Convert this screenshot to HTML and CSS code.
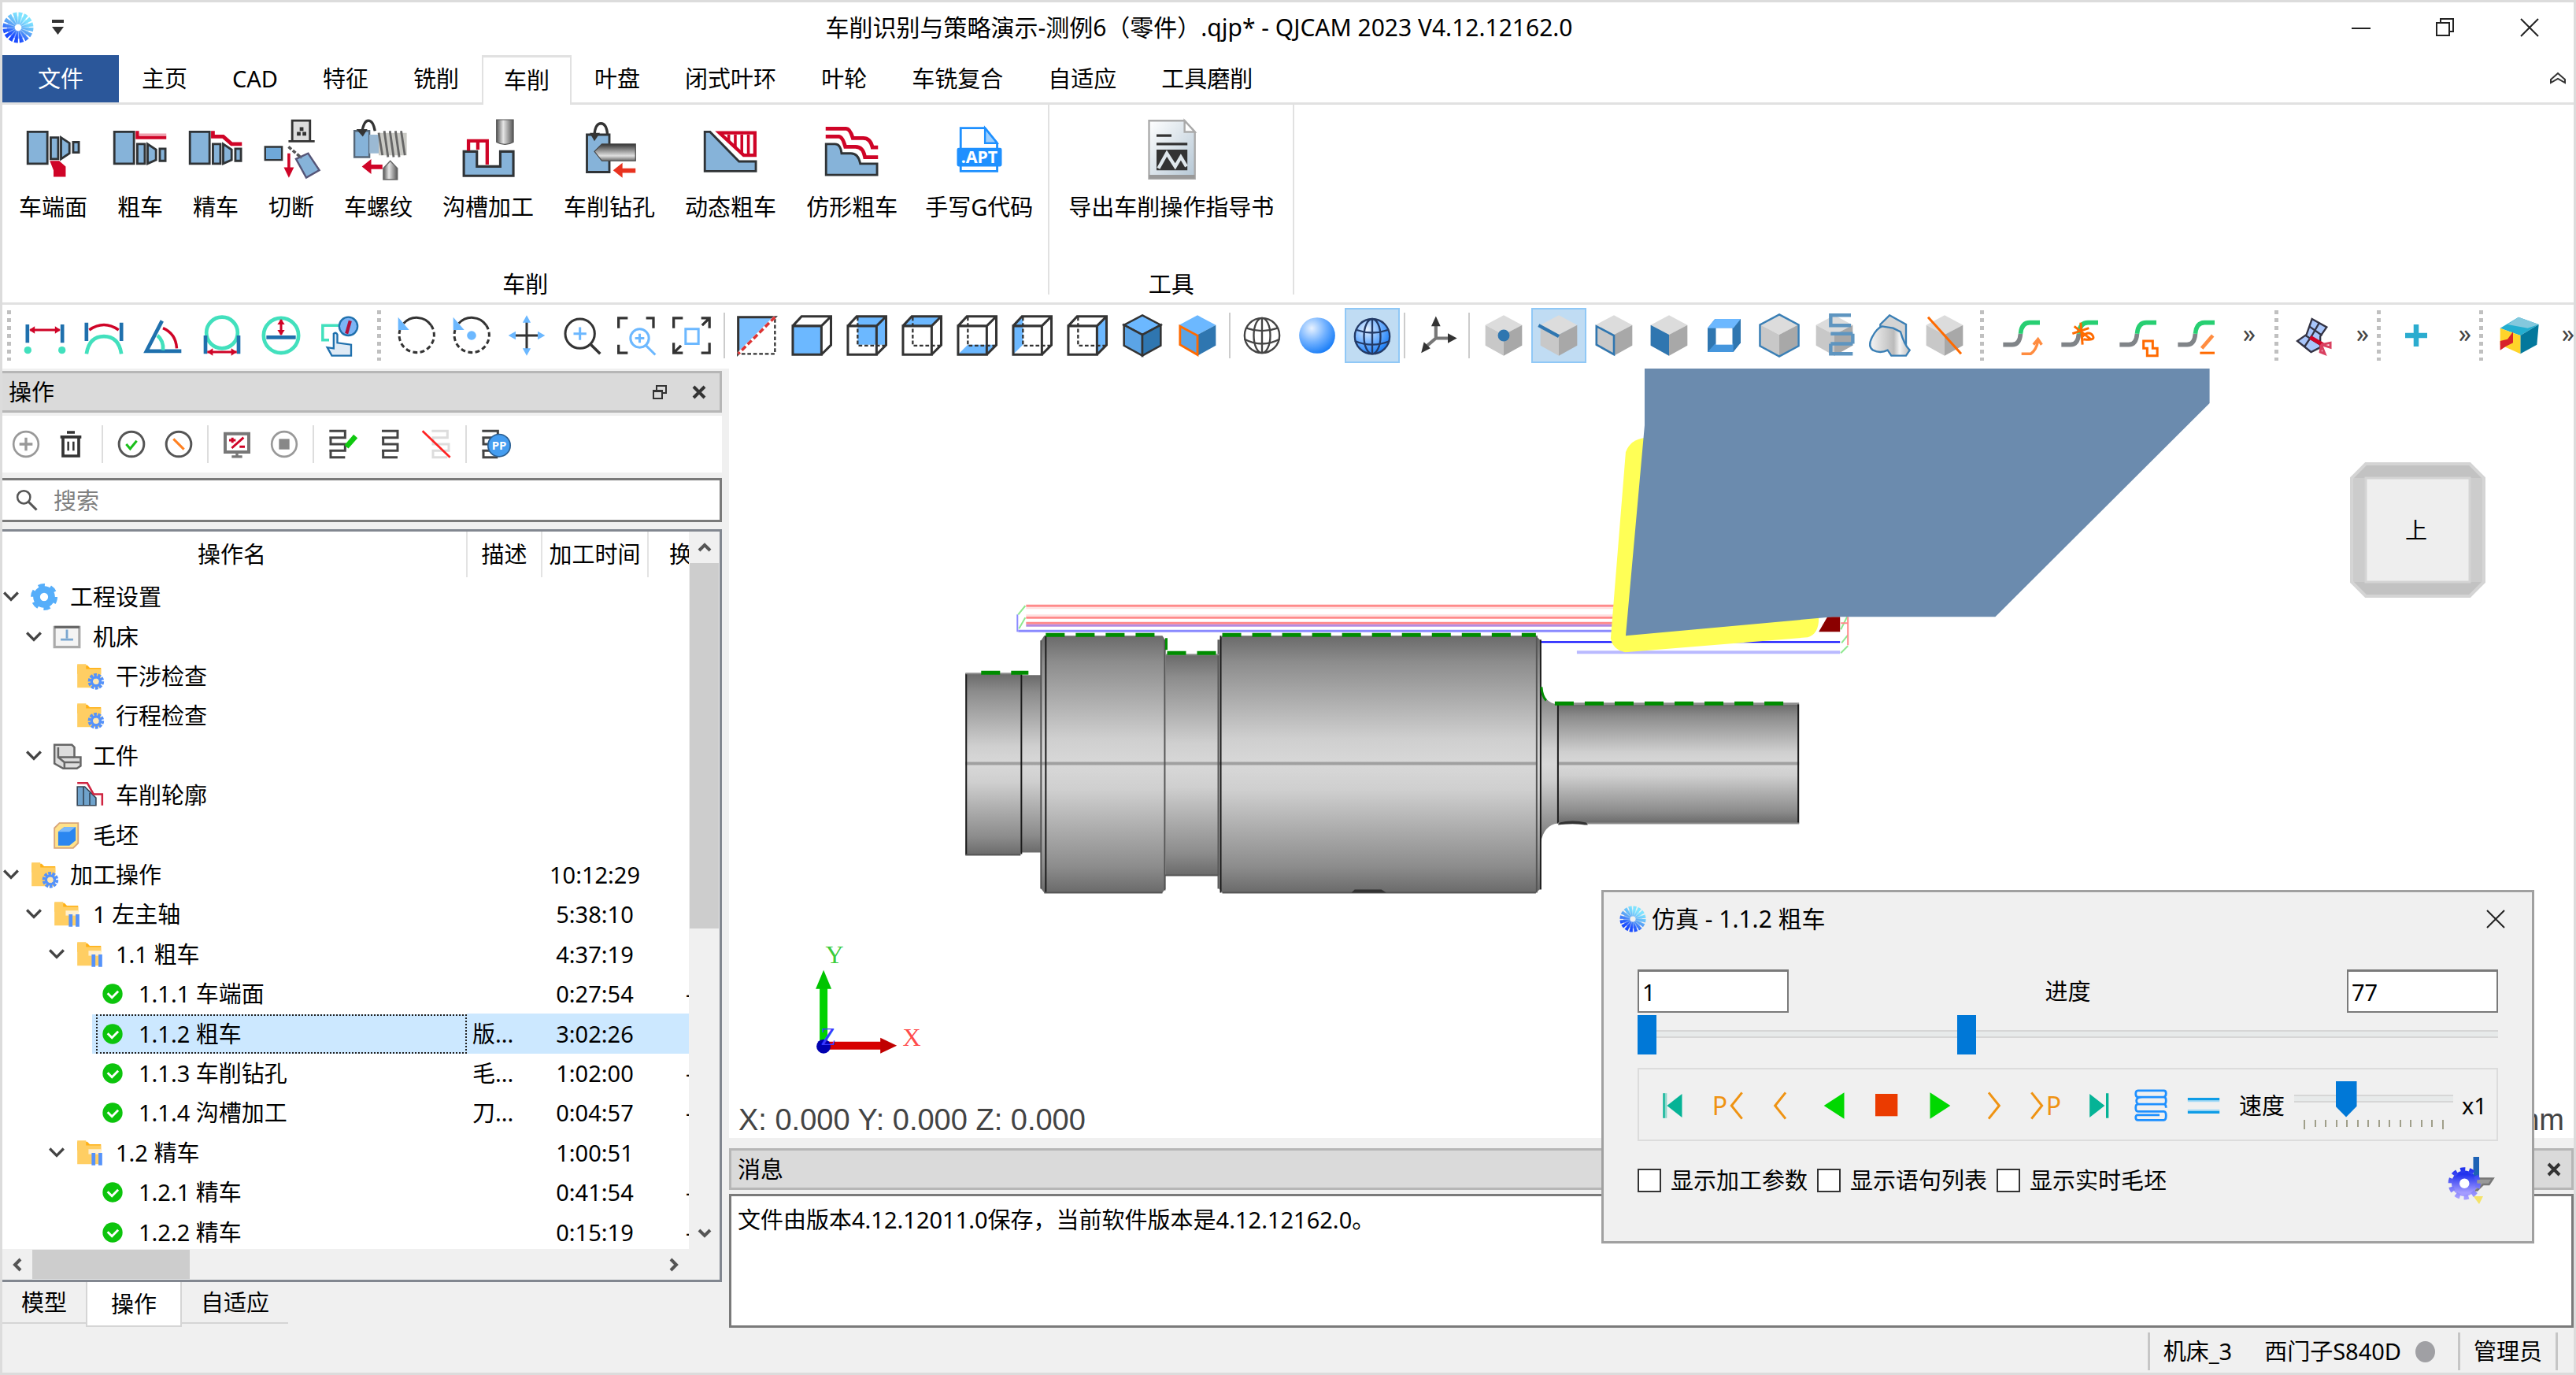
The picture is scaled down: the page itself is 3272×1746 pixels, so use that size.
FILE: index.html
```html
<!DOCTYPE html>
<html lang="zh-CN">
<head>
<meta charset="utf-8">
<title>QJCAM 2023</title>
<link rel="stylesheet" href="styles.css">
</head>
<body>
<svg class="defs" aria-hidden="true">
  <defs>
    <linearGradient id="steel" x1="0" y1="0" x2="0" y2="1">
      <stop offset="0" stop-color="#6a6a6a"/><stop offset=".1" stop-color="#8c8c8c"/><stop offset=".25" stop-color="#adadad"/><stop offset=".4" stop-color="#cfcfcf"/><stop offset=".5" stop-color="#d8d8d8"/><stop offset=".6" stop-color="#cfcfcf"/><stop offset=".75" stop-color="#adadad"/><stop offset=".9" stop-color="#8c8c8c"/><stop offset="1" stop-color="#6a6a6a"/>
    </linearGradient>
    <linearGradient id="rod" x1="0" y1="0" x2="1" y2="0"><stop offset="0" stop-color="#555"/><stop offset=".4" stop-color="#e6e6e6"/><stop offset="1" stop-color="#555"/></linearGradient>
    <linearGradient id="rodv" x1="0" y1="0" x2="0" y2="1"><stop offset="0" stop-color="#333"/><stop offset=".7" stop-color="#e0e0e0"/><stop offset="1" stop-color="#666"/></linearGradient>
    <linearGradient id="petal" x1=".8" y1="0" x2=".2" y2="1"><stop offset="0" stop-color="#7fe3ff"/><stop offset=".5" stop-color="#5ba4f5"/><stop offset="1" stop-color="#1a4bff"/></linearGradient>
    <radialGradient id="ball" cx=".35" cy=".3" r=".8"><stop offset="0" stop-color="#e8f2ff"/><stop offset=".5" stop-color="#6fb0ff"/><stop offset="1" stop-color="#0a74f5"/></radialGradient>
    <linearGradient id="paper" x1="0" y1="0" x2="1" y2="1"><stop offset="0" stop-color="#fff"/><stop offset="1" stop-color="#b4c6d4"/></linearGradient>
    <linearGradient id="shade" x1="0" y1="0" x2="1" y2="0"><stop offset="0" stop-color="#f4f4f4"/><stop offset=".6" stop-color="#bbb"/><stop offset=".75" stop-color="#f4f4f4"/><stop offset="1" stop-color="#bbb"/></linearGradient>
    <linearGradient id="gearc" x1="0" y1="0" x2="0" y2="1"><stop offset="0" stop-color="#2233ee"/><stop offset="1" stop-color="#a49cff"/></linearGradient>
  </defs>
  <symbol id="logo" viewBox="0 0 24 24"><circle cx="12" cy="12" r="7.200" fill="none" stroke="url(#petal)" stroke-width="9" stroke-dasharray="2.010 .817"/><circle cx="12" cy="12" r="5.500" fill="none" stroke="url(#petal)" stroke-width="6" opacity=".5"/></symbol>
  <symbol id="cube" viewBox="0 0 24 24"><path fill="#dcdcdc" d="M12 1l10 5.300-10 5.300L2 6.300z"/><path fill="#c8c8c8" d="M2 6.300l10 5.300V23L2 17.500z"/><path fill="#a8a8a8" d="M22 6.300l-10 5.300V23l10-5.500z"/></symbol>
  <symbol id="wire" viewBox="0 0 24 24"><path fill="none" stroke="#333" stroke-width="1.300" d="M1.700 6.800h15.600v15.600H1.700zM1.700 6.800L6.500 1.600h16v15.600l-5.200 5.200M17.300 6.800l5.200-5.200"/><path fill="none" stroke="#333" stroke-dasharray="2 1.200" d="M7 2v15.500h15"/></symbol>
  <symbol id="zig" viewBox="0 0 24 24"><path fill="none" stroke="#444" stroke-width="1.800" d="M2 2h12v5H3v5h11v5H3v5h11M2 7h9M2 17h9"/></symbol>
  <symbol id="curve" viewBox="0 0 24 24"><path fill="none" stroke="#808488" stroke-width="2.400" d="M1 17h5q4 0 4.500-6"/><path fill="none" stroke="#27cf72" stroke-width="2.400" d="M10.500 11q.5-6 5-6H21"/></symbol>
  <symbol id="down" viewBox="0 0 20 20"><path fill="none" stroke="#444" stroke-width="3" d="M2 5l8 8 8-8"/></symbol>
  <symbol id="folder" viewBox="0 0 24 24"><path fill="#ffb115" d="M2 3h8l2 2h9v5H2z"/><path fill="#ffce63" d="M2 2h7v4h12v15H2z"/></symbol>
  <symbol id="foldergear" viewBox="0 0 24 24"><use href="#folder"/><circle cx="17" cy="16" r="4.500" fill="#ffe7b0" stroke="#5592fa" stroke-width="4" stroke-dasharray="2 .8"/><circle cx="17" cy="16" r="3.500" fill="none" stroke="#5592fa" stroke-width="2"/></symbol>
  <symbol id="folderbars" viewBox="0 0 24 24"><use href="#folder"/><path fill="#fff0cf" d="M11 9h10v4H11z"/><path stroke="#5592fa" stroke-width="3" d="M15 12v10M20.500 12v10"/></symbol>
  <symbol id="ok" viewBox="0 0 24 24"><circle cx="12" cy="12" r="8" fill="#0cc40c"/><path fill="none" stroke="#fff" stroke-width="1.800" d="M8 11.500l3.500 3.500 5-5"/></symbol>
  <symbol id="restore" viewBox="0 0 20 20"><path fill="none" stroke="currentColor" stroke-width="2" d="M6 7V2h12v9h-5M2 8h11v10H2zM2 9h11"/></symbol>
  <symbol id="close" viewBox="0 0 20 20"><path fill="none" stroke="currentColor" stroke-width="4" d="M3 3l14 14M17 3L3 17"/></symbol>
  <symbol id="closethin" viewBox="0 0 24 24"><path fill="none" stroke="#222" stroke-width="2" d="M1 1l22 22M23 1L1 23"/></symbol>
  <symbol id="turned" viewBox="0 0 32 32"><g fill="#86b3d9" stroke="#2f3336" stroke-width="1.200"><path d="M2.200 6.500h10.500v17H2.200zM14.500 13h4v10.500h-4zM20 13l4.500 3v5.500l-4.500 2zM26.500 15.500h3v6.500h-3z"/></g></symbol>
</svg>

<div class="window">
  <header class="titlebar">
    <div class="quick"><svg class="s40"><use href="#logo"/></svg><button class="qmenu" aria-label="自定义"><svg viewBox="0 0 20 24"><path fill="#333" d="M3 2h15v4H3zM3 11h15l-7.500 10z"/></svg></button></div>
    <h1>车削识别与策略演示-测例6（零件）.qjp* - QJCAM 2023 V4.12.12162.0</h1>
    <div class="winbtns">
      <button aria-label="最小化"><svg class="s24" viewBox="0 0 24 24"><path stroke="#222" stroke-width="2" d="M0 13h24"/></svg></button>
      <button aria-label="还原"><svg class="s24" viewBox="0 0 24 24"><path fill="none" stroke="#222" stroke-width="2" d="M6 6V1h16v16h-5M1 6h16v16H1z"/></svg></button>
      <button aria-label="关闭"><svg class="s24"><use href="#closethin"/></svg></button>
    </div>
  </header>

  <nav class="tabs">
    <button class="file">文件</button><button>主页</button><button>CAD</button><button>特征</button><button>铣削</button><button class="active">车削</button><button>叶盘</button><button>闭式叶环</button><button>叶轮</button><button>车铣复合</button><button>自适应</button><button>工具磨削</button>
    <span class="fill"></span>
    <svg class="collapse" viewBox="0 0 24 24"><path fill="none" stroke="#333" stroke-width="2" d="M3 13l9-8 9 8v4l-9-5-9 5z"/></svg>
  </nav>

  <section class="ribbon">
    <div class="group">
      <div class="items">
        <button><svg viewBox="0 0 32 32"><g fill="#86b3d9" stroke="#2f3336" stroke-width="1.200"><path d="M2.200 6.500h10.500v17H2.200zM14.500 9.500h4v11.500h-4zM20 9.500l4.500 3v5.500l-4.500 3zM26.500 12h3v5.500h-3z"/></g><path fill="#cf0427" d="M14 22h5l3.500 3v5.500H16V27z"/></svg>车端面</button>
        <button><svg viewBox="0 0 32 32"><use href="#turned"/><path fill="none" stroke="#cf0427" stroke-width="1.800" d="M14.500 6v3.500H30"/><path stroke="#f0a0ae" stroke-width="1.200" d="M15.500 8H30"/></svg>粗车</button>
        <button><svg viewBox="0 0 32 32"><use href="#turned"/><path fill="none" stroke="#cf0427" stroke-width="2" d="M14.500 6v3H20l4.500 4H30"/></svg>精车</button>
        <button><svg viewBox="0 0 32 32"><path fill="#ddd" stroke="#333" stroke-width="1.200" d="M16.500.5h9.500v11h-9.500zM14.500 11.500h14"/><path fill="#333" d="M20.500 4h2v2h-2zM19 6.500h2v2h-2zM22 6.500h2v2h-2z"/><path fill="#6fa8d8" stroke="#2f3336" d="M2 14.500h9v7H2z"/><path fill="#86b3d9" stroke="#557" d="M18.500 21l6.500-3 6 9-7 4z"/><path stroke="#555" stroke-width="1.500" stroke-dasharray="2 1" d="M14.500 14.500l7 6"/><path stroke="#cf0427" stroke-width="1.500" d="M14.700 18v10"/><path fill="#cf0427" d="M12 25.500h5.400l-2.700 5.500z"/></svg>切断</button>
        <button><svg viewBox="0 0 32 32"><path fill="#86b3d9" stroke="#567" d="M3 6h8v14H3z"/><path fill="#9bb9d3" d="M11 8h5v10h-5z"/><path fill="#c9c9c4" d="M16 7h15v12H16z"/><path fill="none" stroke="#666" stroke-width="1.200" d="M16 7l2 12M19 6l2 14M22 6l2 14M25 6l2 14M28 6l2 13"/><path fill="none" stroke="#333" stroke-width="1.400" d="M14 6q-1-5.500-3.500-5.500T7 7"/><path fill="#333" d="M4 5h6l-2.500 4z"/><path fill="url(#rod)" stroke="#666" stroke-width=".6" d="M18.500 32v-6l3.700-4 3.800 4v6z"/><path fill="#cf0427" d="M7 25l5-4v3h6v2.400h-6V29z"/></svg>车螺纹</button>
        <button><svg viewBox="0 0 32 32"><path fill="#86b3d9" stroke="#2f3336" stroke-width="1.300" d="M3 17h7v8h12.500v-8h7v13H3z"/><path fill="none" stroke="#cf0427" stroke-width="1.800" d="M5.500 16.500v-5.200h10V24M10.500 11v5"/><path fill="url(#rod)" stroke="#555" stroke-width=".5" d="M20.500 0h9v12q-4.500 2.500-9 0z"/></svg>沟槽加工</button>
        <button><svg viewBox="0 0 32 32"><path fill="#86b3d9" stroke="#2f3336" stroke-width="1.200" d="M4 8h12v20H4z"/><path fill="url(#rodv)" stroke="#444" stroke-width=".5" d="M8 17l4-4h18v9H12z"/><path fill="none" stroke="#333" stroke-width="1.400" d="M15 8q-.5-6-3.500-6T8 8"/><path fill="#333" d="M5.500 7h5.500l-3 4.500z"/><path fill="#e8321f" d="M18 27l5-4v3h7v2.400h-7V31z"/></svg>车削钻孔</button>
        <button><svg viewBox="0 0 32 32"><path fill="#86b3d9" stroke="#2f3336" stroke-width="1.200" d="M2.200 6.500H5l15.500 15.800h9V27.500H2.200z"/><path fill="#fff" stroke="#cf0427" stroke-width="1.800" d="M10 7h19v12h-6z"/><path stroke="#cf0427" stroke-width="1.500" d="M15 8v4M18.500 8v7M22 8v10M25.500 8v11"/></svg>动态粗车</button>
        <button><svg viewBox="0 0 32 32"><path fill="#86b3d9" stroke="#2f3336" stroke-width="1.200" d="M2.200 13H7q3 0 3.500 5h5q4 0 5 5.500h9V29.500H2.200z"/><path fill="none" stroke="#cf0427" stroke-width="2" d="M2 4.800h11q2 0 3.500 5H22q4 0 5 5h3M2 9h7q2 0 3.500 5.500H18q4 0 5 5.500h7"/></svg>仿形粗车</button>
        <button class="last"><svg viewBox="0 0 32 32"><path fill="#fff" stroke="#1e90ff" stroke-width="1.200" d="M6 4.500h13l6.500 8V27.500H6z"/><path fill="#9ccfff" stroke="#1e90ff" d="M19 4.500v8h6.500z"/><rect x="4" y="15" width="24" height="10" rx="1" fill="#1e90ff"/><text x="16" y="23" class="apt">.APT</text></svg>手写G代码</button>
      </div>
      <div class="caption">车削</div>
    </div>
    <div class="group tools">
      <div class="items">
        <button><svg viewBox="0 0 32 32"><path fill="url(#paper)" stroke="#aaa" d="M4 .5h19l5.500 6v25H4z"/><path fill="#fff" stroke="#aaa" d="M23 .5v6h5.500z"/><path fill="#999" d="M4 29.500h24.500v2H4z"/><path stroke="#333" stroke-width="1.400" d="M8 8.500h8M8 13h16.500"/><path fill="#333" d="M8 16h16.500v11H8z"/><path fill="none" stroke="#dfe7ec" stroke-width="1.800" d="M9 26l4.500-8 4.500 7 3-5 3 5"/></svg>导出车削操作指导书</button>
      </div>
      <div class="caption">工具</div>
    </div>
  </section>

  <div class="viewbar">
    <i class="grip first"></i>
    <div class="set wide">
      <button aria-label="距离"><svg viewBox="0 0 24 24"><path fill="none" stroke="#1f70ad" stroke-width="2" d="M2.500 6v10M21.500 6v10"/><path stroke="#cf0427" stroke-width="1.200" d="M4 9h16"/><path fill="#cf0427" d="M3.500 9l3-2v4zM20.500 9l-3-2v4z"/><circle cx="2.700" cy="20" r="2" fill="#42e0bd"/><circle cx="21.300" cy="20" r="2" fill="#42e0bd"/></svg></button>
      <button aria-label="弧长"><svg viewBox="0 0 24 24"><path fill="none" stroke="#1f70ad" stroke-width="2" d="M2.500 5v10M21.500 5v10"/><path fill="none" stroke="#cf0427" stroke-width="1.500" d="M4 9q8-5.500 16 0"/><path fill="none" stroke="#42e0bd" stroke-width="2" d="M2.500 22q1.500-9.500 9.500-9.500T21.500 22"/></svg></button>
      <button aria-label="角度"><svg viewBox="0 0 24 24"><path fill="none" stroke="#1f70ad" stroke-width="2" d="M11.500 4L3 20.500h19"/><path fill="none" stroke="#cf0427" stroke-width="1.500" d="M12 8q7 3 7.500 11"/><path fill="none" stroke="#42e0bd" stroke-width="2" d="M9 12q3.500 3 3 8"/></svg></button>
      <button aria-label="直径"><svg viewBox="0 0 24 24"><circle cx="12" cy="10.500" r="8.500" fill="none" stroke="#42e0bd" stroke-width="2"/><path stroke="#1f70ad" stroke-width="2" d="M3 12v10M21 12v10"/><path stroke="#cf0427" stroke-width="1.300" d="M4 21h16"/><path fill="#cf0427" d="M4 21l3-2v4zM20 21l-3-2v4z"/></svg></button>
      <button aria-label="半径"><svg viewBox="0 0 24 24"><circle cx="12" cy="12" r="9.500" fill="none" stroke="#42e0bd" stroke-width="2"/><path stroke="#1f70ad" stroke-width="2" d="M4 13h16"/><path stroke="#cf0427" stroke-width="1.300" d="M12 3.500v8"/><path fill="#cf0427" d="M12 3l2 3h-4zM12 12l2-3h-4z"/></svg></button>
      <button aria-label="信息"><svg viewBox="0 0 24 24"><path fill="none" stroke="#42e0bd" stroke-width="1.500" d="M12 6.500H2.500v8H6"/><circle cx="16.500" cy="7" r="5" fill="#7db4f5" stroke="#1f70ad"/><path stroke="#b0103a" stroke-width="1.800" d="M17.500 4l-2 7"/><path fill="#dfeaf5" stroke="#1f70ad" d="M8.500 11q1.500-1 2 .5V16l7.500 1v6H7.500L5 18.500l3.500.5z"/></svg></button>
    </div>
    <i class="grip"></i>
    <div class="set">
      <button aria-label="旋转"><svg viewBox="0 0 24 24"><path fill="none" stroke="#333" stroke-width="1.300" d="M5 5.500A9.500 9.500 0 0 1 20 6.500"/><path fill="none" stroke="#333" stroke-width="1.300" stroke-dasharray="2.500 1.500" d="M20 6.500A9.500 9.500 0 1 1 3 9"/><path fill="#6cb8ff" d="M2 2v7h6z"/></svg></button>
      <button aria-label="绕点旋转"><svg viewBox="0 0 24 24"><path fill="none" stroke="#333" stroke-width="1.300" d="M5 5.500A9.500 9.500 0 0 1 20 6.500"/><path fill="none" stroke="#333" stroke-width="1.300" stroke-dasharray="2.500 1.500" d="M20 6.500A9.500 9.500 0 1 1 3 9"/><path fill="#6cb8ff" d="M2 2v7h6z"/><circle cx="12" cy="12" r="2.500" fill="#6cb8ff"/></svg></button>
      <button aria-label="平移"><svg viewBox="0 0 24 24"><path stroke="#333" stroke-width="1.300" d="M12 4v16M4 12h16"/><path fill="#6cb8ff" d="M12 1l2.200 4H9.800zM12 23l2.200-4H9.800zM2 12l4-2.200v4.400zM22 12l-4-2.200v4.400z"/></svg></button>
      <button aria-label="缩放"><svg viewBox="0 0 24 24"><circle cx="11" cy="11" r="8" fill="none" stroke="#333" stroke-width="1.300"/><path stroke="#333" stroke-width="1.500" d="M17 17l5 5"/><path stroke="#6cb8ff" stroke-width="1.300" d="M11 7.500v7M7.500 11h7"/></svg></button>
      <button aria-label="窗口缩放"><svg viewBox="0 0 24 24"><path fill="none" stroke="#333" stroke-width="1.400" d="M2 8V2.500h5M17 2.500h4V8M2 17v4.500h5"/><circle cx="13.500" cy="13.500" r="5" fill="none" stroke="#6cb8ff" stroke-width="1.300"/><path stroke="#6cb8ff" stroke-width="1.300" d="M17 17.500l5 5M13.500 11v5M11 13.500h5"/></svg></button>
      <button aria-label="全屏"><svg viewBox="0 0 24 24"><path fill="none" stroke="#333" stroke-width="1.400" d="M2 8V2.500h5M17 2.500h4.500V8M2 16v5.500h5M17 21.500h4.500V16M21.500 2.500l-4 4M2 21.500l4-4"/><path fill="none" stroke="#6cb8ff" stroke-width="1.300" d="M8.500 8.500h7v8h-7z"/></svg></button>
    </div>
    <i class="bar"></i>
    <div class="set">
      <button aria-label="剖切"><svg viewBox="0 0 24 24"><path fill="#7cc0ff" stroke="#333" stroke-width="1.300" d="M2 22V2h20z"/><path fill="none" stroke="#333" stroke-dasharray="2 1.200" d="M22 3v19H3"/><path stroke="#fff" stroke-width="1.600" d="M22 2L2 22"/><path stroke="#d33" stroke-width="1.500" stroke-dasharray="3 1.500" d="M22 2L2 22"/></svg></button>
      <button aria-label="前视"><svg viewBox="0 0 24 24"><path fill="#6cb8ff" d="M2 7h15v15H2z"/><path fill="none" stroke="#333" stroke-width="1.300" d="M1.700 6.800h15.600v15.600H1.700zM1.700 6.800L6.500 1.600h16v15.600l-5.200 5.200M17.300 6.800l5.200-5.200"/></svg></button>
      <button aria-label="后视"><svg viewBox="0 0 24 24"><path fill="#6cb8ff" d="M7 2h15v15H7z"/><use href="#wire"/></svg></button>
      <button aria-label="俯视"><svg viewBox="0 0 24 24"><path fill="#6cb8ff" d="M2 7l5-5h15l-5 5z"/><use href="#wire"/></svg></button>
      <button aria-label="仰视"><svg viewBox="0 0 24 24"><path fill="#6cb8ff" d="M2 22l5-5h15l-5 5z"/><use href="#wire"/></svg></button>
      <button aria-label="左视"><svg viewBox="0 0 24 24"><path fill="#6cb8ff" d="M2 7l5-5v15l-5 5z"/><use href="#wire"/></svg></button>
      <button aria-label="右视"><svg viewBox="0 0 24 24"><path fill="#6cb8ff" d="M17 7l5-5v15l-5 5z"/><use href="#wire"/></svg></button>
      <button aria-label="轴测"><svg viewBox="0 0 24 24"><g stroke="#333" stroke-width="1.100"><path fill="#6cb8ff" d="M12 1l10 5.300-10 5.300L2 6.300z"/><path fill="#5ba4e6" d="M2 6.300l10 5.300V23L2 17.500z"/><path fill="#2f76b0" d="M22 6.300l-10 5.300V23l10-5.500z"/></g></svg></button>
      <button aria-label="正视于面"><svg viewBox="0 0 24 24"><path fill="#6cb8ff" d="M12 1l10 5.300-10 5.300L2 6.300z"/><path fill="#2f76b0" d="M22 6.300l-10 5.300V23l10-5.500z"/><path fill="#5ba4e6" stroke="#ff6a00" stroke-width="1.200" d="M2.500 7l9.500 5v10.500L2.500 17z"/></svg></button>
    </div>
    <i class="bar"></i>
    <div class="set">
      <button aria-label="线框"><svg viewBox="0 0 24 24"><g fill="none" stroke="#444"><circle cx="12" cy="12" r="9.500"/><ellipse cx="12" cy="12" rx="4.500" ry="9.500"/><path d="M3.500 8q8.500 3 17 0M2.500 14q9.500 5 19 0M12 2.500v19"/></g></svg></button>
      <button aria-label="着色"><svg viewBox="0 0 24 24"><circle cx="12" cy="12" r="9.800" fill="url(#ball)"/></svg></button>
      <button class="on" aria-label="着色带边"><svg viewBox="0 0 24 24"><circle cx="12" cy="12.500" r="9.500" fill="url(#ball)"/><g fill="none" stroke="#233a66"><circle cx="12" cy="12.500" r="9.500"/><ellipse cx="12" cy="12.500" rx="4.500" ry="9.500"/><path d="M3.500 9q8.500 3 17 0M2.500 15q9.500 4 19 0M12 3v19"/></g></svg></button>
    </div>
    <i class="bar"></i>
    <div class="set">
      <button aria-label="坐标轴"><svg viewBox="0 0 24 24"><path fill="none" stroke="#777" stroke-width="1.800" d="M11.500 5v8.500H20M11.500 13.500L5 19"/><path fill="#333" d="M11.500 1.500l2.500 5.500H9zM23 13.500l-5 2.700v-5.400zM3.500 21.500l1.500-6 3.500 3.500z"/></svg></button>
    </div>
    <i class="bar"></i>
    <div class="set picks">
      <button aria-label="选点"><svg viewBox="0 0 24 24"><use href="#cube"/><circle cx="12" cy="12" r="3.200" fill="#2f76b0"/></svg></button>
      <button class="on" aria-label="选边"><svg viewBox="0 0 24 24"><use href="#cube"/><path stroke="#2f76b0" stroke-width="1.800" d="M1 6.500l11 6"/></svg></button>
      <button aria-label="选环"><svg viewBox="0 0 24 24"><use href="#cube"/><path fill="none" stroke="#2f76b0" stroke-width="1.100" d="M2.500 7l9.500 5v10.300L2.500 17z"/></svg></button>
      <button aria-label="选面"><svg viewBox="0 0 24 24"><use href="#cube"/><path fill="#2f76b0" d="M2 6.300l10 5.300V23L2 17.500z"/></svg></button>
      <button aria-label="选框"><svg viewBox="0 0 24 24"><path fill="#2f76b0" d="M3 8l4-5h14v13l-4 5H3z"/><path fill="#6cb8ff" d="M3 8l4-5h14l-4 5z"/><path fill="#4596dd" d="M3 21l4-4.500h10V21z"/><path fill="#fff" d="M7.500 8h9v9h-9z"/></svg></button>
      <button aria-label="选体"><svg viewBox="0 0 24 24"><use href="#cube"/><path fill="none" stroke="#3a7fb5" stroke-width="1.100" d="M12 .6L22.500 6.200v11.500L12 23.400 1.500 17.700V6.200z"/></svg></button>
      <button aria-label="选刀轨"><svg viewBox="0 0 24 24"><use href="#cube"/><path fill="none" stroke="#5e95c0" stroke-width="1.900" d="M21 1H10v5.500h11M22 11H10M10 16.500h12M22 11v5.500M10 16.500V22h12"/></svg></button>
      <button aria-label="选曲面"><svg viewBox="0 0 24 24"><path fill="#d4d4d4" stroke="#3a7fb5" d="M12 1l9 5v11l-9 3-5-4V6z"/><path fill="url(#shade)" stroke="#3a7fb5" d="M8 7q-3 1-5.500 6T3 20q4 2 8 0l2 3h8l2-3q-3-3-5-10l-4-2z"/></svg></button>
      <button aria-label="取消选择"><svg viewBox="0 0 24 24"><use href="#cube"/><path stroke="#ff6a00" stroke-width="1.300" d="M3 2l18 20"/></svg></button>
    </div>
    <i class="grip"></i>
    <div class="set curves">
      <button aria-label="曲线延伸"><svg viewBox="0 0 24 24"><use href="#curve"/><path fill="none" stroke="#ff8c40" stroke-width="1.500" d="M11 22h5q3-2 4-7M17.500 17l2.500-3 2 3"/></svg></button>
      <button aria-label="曲线断开"><svg viewBox="0 0 24 24"><use href="#curve"/><path fill="none" stroke="#ff6a00" stroke-width="1.300" d="M8 7l9 7M11.500 5l1 12M7 11l9-3M12 13q4-4 6-1t-5 2"/></svg></button>
      <button aria-label="曲线复制"><svg viewBox="0 0 24 24"><use href="#curve"/><path fill="none" stroke="#ff6a00" stroke-width="1.300" d="M14 15h5v4h2.500v4H16v-4h-2z"/></svg></button>
      <button aria-label="曲线编辑"><svg viewBox="0 0 24 24"><use href="#curve"/><path stroke="#ff6a00" stroke-width="1.300" d="M13 21.500h8"/><path stroke="#ff8c40" stroke-width="2" d="M14 19l6-7"/></svg></button>
      <span class="more">»</span>
    </div>
    <i class="grip"></i>
    <div class="set end"><button aria-label="修剪曲面"><svg viewBox="0 0 24 24"><path fill="#a9c6fb" stroke="#334" d="M11 3l8 4.500-3.500 5 0 6-5 2.500L3 15l5-3.500z"/><path fill="none" stroke="#334" d="M9.500 7l7 5M7.500 12l8 5M15 5l-4 7-4 6"/><path fill="none" stroke="#cf0427" stroke-width="2.200" d="M10 13l7 4"/><path fill="none" stroke="#d94060" stroke-width="1.300" d="M16 17l5-1v2.500zM16 17l2 5-2.500-1z"/></svg></button><span class="more">»</span></div>
    <i class="grip"></i>
    <div class="set end"><button aria-label="添加"><svg viewBox="0 0 24 24"><path stroke="#2baccf" stroke-width="2.800" d="M12 6v12M6 12h12"/></svg></button><span class="more">»</span></div>
    <i class="grip"></i>
    <div class="set end"><button aria-label="毛坯仿真"><svg viewBox="0 0 24 24"><path fill="#23aed0" d="M12 2l11 4-10 6L2 8z"/><path fill="#84c8dd" d="M12 2l11 4-6 2L6 6z"/><path fill="#03789c" d="M23 6l-1 11-9 5V12z"/><path fill="#ffd42a" d="M2 8l11 4v10L2 17z"/><path fill="#d8232a" d="M2 20v-5l4-1 3-4v6l-4 2z"/></svg></button><span class="more">»</span></div>
  </div>

  <main class="work">
    <aside class="side">
      <div class="dockhead">操作<span class="headbtns"><button aria-label="浮动"><svg class="s20"><use href="#restore"/></svg></button><button aria-label="关闭"><svg class="s20"><use href="#close"/></svg></button></span></div>
      <div class="sidebar">
        <button aria-label="新建"><svg viewBox="0 0 24 24"><circle cx="12" cy="12" r="9.500" fill="none" stroke="#999" stroke-width="1.600"/><path stroke="#999" stroke-width="2" d="M12 7v10M7 12h10"/></svg></button>
        <button class="narrow" aria-label="删除"><svg viewBox="0 0 24 24"><path fill="none" stroke="#333" stroke-width="2.200" d="M6 7v14h12V7M4 6.500h16M9 3h6"/><path stroke="#333" stroke-width="1.500" d="M10 10v7M14 10v7"/></svg></button>
        <i></i>
        <button aria-label="启用"><svg viewBox="0 0 24 24"><circle cx="12" cy="12" r="9.500" fill="none" stroke="#555" stroke-width="1.800"/><path fill="none" stroke="#1bbf1b" stroke-width="1.800" d="M8 12l3 3.500 5-6"/></svg></button>
        <button aria-label="禁用"><svg viewBox="0 0 24 24"><circle cx="12" cy="12" r="9.500" fill="none" stroke="#555" stroke-width="1.800"/><path stroke="#ff8020" stroke-width="1.800" d="M8 8l8 8"/></svg></button>
        <i></i>
        <button aria-label="计算"><svg viewBox="0 0 24 24"><path fill="#fff" stroke="#777" stroke-width="2.400" d="M3 4h18v14H3z"/><path stroke="#777" stroke-width="2" d="M8 21.500h8M12 18v3"/><path fill="none" stroke="#cf0427" stroke-width="1.800" d="M6 9h5M8.500 7v4M17 7l-9 8M14 14h4"/></svg></button>
        <button aria-label="停止"><svg viewBox="0 0 24 24"><circle cx="12" cy="12" r="9.500" fill="none" stroke="#999" stroke-width="1.600"/><path fill="#888" d="M8 8h8v8H8z"/></svg></button>
        <i></i>
        <button aria-label="编辑刀轨"><svg viewBox="0 0 24 24"><use href="#zig"/><path stroke="#0fc80f" stroke-width="4" d="M15 14l7-8"/></svg></button>
        <button aria-label="刀轨"><svg viewBox="-4 0 24 24"><use href="#zig" width="24" height="24"/></svg></button>
        <button aria-label="删除刀轨"><svg viewBox="0 0 24 24"><path fill="none" stroke="#ddd" stroke-width="1.800" d="M8 2h12v5H9v5h12v5H9v5h11"/><path stroke="#f22" stroke-width="1.600" d="M1 2l21 20"/></svg></button>
        <i></i>
        <button aria-label="后处理"><svg viewBox="0 0 24 24"><use href="#zig"/><circle cx="15" cy="13" r="8.500" fill="#459df0" stroke="#2b5f92"/><text x="15" y="16" class="pp">PP</text></svg></button>
      </div>
      <label class="search"><svg class="s30" viewBox="0 0 24 24"><circle cx="9" cy="9" r="6.500" fill="none" stroke="#555" stroke-width="2"/><path stroke="#555" stroke-width="2.500" d="M14 14l8 8"/></svg><input type="text" placeholder="搜索" aria-label="搜索"></label>
      <div class="treebox">
        <div class="treeview">
          <table>
            <colgroup><col class="c1"><col class="c2"><col class="c3"><col></colgroup>
            <thead><tr><th>操作名</th><th>描述</th><th>加工时间</th><th class="cut">换</th></tr></thead>
            <tbody>
              <tr><td><div class="name"><svg class="tw"><use href="#down"/></svg><span class="item"><svg viewBox="0 0 24 24"><circle cx="12" cy="12" r="6" fill="none" stroke="#56aefa" stroke-width="5.500"/><circle cx="12" cy="12" r="9" fill="none" stroke="#56aefa" stroke-width="3.500" stroke-dasharray="5 4.425"/></svg>工程设置</span></div></td><td></td><td></td><td></td></tr>
              <tr><td><div class="name l1"><svg class="tw"><use href="#down"/></svg><span class="item"><svg viewBox="0 0 24 24"><path fill="#f4f4f4" stroke="#aaa" stroke-width="2" d="M2 4h20v16H2z"/><path stroke="#666" stroke-width="2" d="M2 4h20"/><path fill="none" stroke="#7aa6cf" stroke-width="1.800" d="M12 6v7M7 14h10"/></svg>机床</span></div></td><td></td><td></td><td></td></tr>
              <tr><td><div class="name l2"><span class="tw"></span><span class="item"><svg><use href="#foldergear"/></svg>干涉检查</span></div></td><td></td><td></td><td></td></tr>
              <tr><td><div class="name l2"><span class="tw"></span><span class="item"><svg><use href="#foldergear"/></svg>行程检查</span></div></td><td></td><td></td><td></td></tr>
              <tr><td><div class="name l1"><svg class="tw"><use href="#down"/></svg><span class="item"><svg viewBox="0 0 24 24"><path fill="#ddd" stroke="#666" stroke-width="1.600" d="M2 3h14l2 2v8h5v7l-3 2H9l-7-4z"/><path fill="none" stroke="#666" stroke-width="1.600" d="M5 5v8h13M5 13l5 4h12M10 17v5"/></svg>工件</span></div></td><td></td><td></td><td></td></tr>
              <tr><td><div class="name l2"><span class="tw"></span><span class="item"><svg viewBox="0 0 24 24"><path fill="#6fa3cc" stroke="#345" d="M2 5h6l9 9v6H2z"/><path stroke="#345" d="M7 5v15M12 10v10"/><path fill="none" stroke="#cf2440" stroke-width="1.600" d="M2 2h8l5 9h7v9"/></svg>车削轮廓</span></div></td><td></td><td></td><td></td></tr>
              <tr><td><div class="name l1"><span class="tw"></span><span class="item"><svg viewBox="0 0 24 24"><path fill="#ffe28a" stroke="#d9a679" stroke-width="1.200" d="M2 6l4-4h15v16l-4 4H2z"/><path fill="#2b86f0" d="M5 9l5-4h9v11l-5 4H5z"/><path fill="#7ab8fa" d="M5 9l5-4h9l-5 4z"/></svg>毛坯</span></div></td><td></td><td></td><td></td></tr>
              <tr><td><div class="name"><svg class="tw"><use href="#down"/></svg><span class="item"><svg><use href="#foldergear"/></svg>加工操作</span></div></td><td></td><td>10:12:29</td><td></td></tr>
              <tr><td><div class="name l1"><svg class="tw"><use href="#down"/></svg><span class="item"><svg><use href="#folderbars"/></svg>1 左主轴</span></div></td><td></td><td>5:38:10</td><td></td></tr>
              <tr><td><div class="name l2"><svg class="tw"><use href="#down"/></svg><span class="item"><svg><use href="#folderbars"/></svg>1.1 粗车</span></div></td><td></td><td>4:37:19</td><td></td></tr>
              <tr><td><div class="name l3"><span class="tw"></span><span class="item"><svg><use href="#ok"/></svg>1.1.1 车端面</span></div></td><td></td><td>0:27:54</td><td>-</td></tr>
              <tr class="sel"><td><div class="name l3"><span class="tw"></span><span class="item"><svg><use href="#ok"/></svg>1.1.2 粗车</span></div></td><td>版...</td><td>3:02:26</td><td></td></tr>
              <tr><td><div class="name l3"><span class="tw"></span><span class="item"><svg><use href="#ok"/></svg>1.1.3 车削钻孔</span></div></td><td>毛...</td><td>1:02:00</td><td>-</td></tr>
              <tr><td><div class="name l3"><span class="tw"></span><span class="item"><svg><use href="#ok"/></svg>1.1.4 沟槽加工</span></div></td><td>刀...</td><td>0:04:57</td><td>-</td></tr>
              <tr><td><div class="name l2"><svg class="tw"><use href="#down"/></svg><span class="item"><svg><use href="#folderbars"/></svg>1.2 精车</span></div></td><td></td><td>1:00:51</td><td></td></tr>
              <tr><td><div class="name l3"><span class="tw"></span><span class="item"><svg><use href="#ok"/></svg>1.2.1 精车</span></div></td><td></td><td>0:41:54</td><td>-</td></tr>
              <tr><td><div class="name l3"><span class="tw"></span><span class="item"><svg><use href="#ok"/></svg>1.2.2 精车</span></div></td><td></td><td>0:15:19</td><td>-</td></tr>
            </tbody>
          </table>
        </div>
        <div class="vscroll"><svg viewBox="0 0 20 20"><path fill="none" stroke="#555" stroke-width="4" d="M3 14l7-7 7 7"/></svg><i></i><svg viewBox="0 0 20 20"><path fill="none" stroke="#555" stroke-width="4" d="M3 6l7 7 7-7"/></svg></div>
        <div class="hscroll"><svg viewBox="0 0 20 20"><path fill="none" stroke="#555" stroke-width="4" d="M14 3l-7 7 7 7"/></svg><i></i><svg viewBox="0 0 20 20"><path fill="none" stroke="#555" stroke-width="4" d="M6 3l7 7-7 7"/></svg></div>
      </div>
      <div class="docktabs"><button>模型</button><button class="active">操作</button><button>自适应</button></div>
    </aside>

    <section class="center">
      <div class="viewport">
        <svg class="scene" viewBox="926 468 2341 978" preserveAspectRatio="xMinYMin meet">
          <g fill="none" stroke-width="3">
            <path stroke="#ff8a8a" d="M1303 769H2080M1303 784H2080M1303 791H2080"/>
            <path stroke="#ffe0e0" stroke-width="2" d="M1303 772H2080M1303 781H2080"/>
            <path stroke="#b48ae0" d="M1303 794H2080"/>
            <path stroke="#8a8aff" d="M1293 801H2080"/>
            <path stroke="#8a8aff" stroke-width="2" d="M1292 780v22"/>
            <path stroke="#8fe88f" stroke-width="2" d="M1302 769l-9 11M1302 784l-8 14M2345 783l-8 16M2346 806l-8 10M2346 820l-9 9"/>
            <path stroke="#ff8a8a" stroke-width="2" d="M2346 783v36M2337 791h8"/>
            <path stroke="#0000ff" stroke-width="2" d="M1956 815H2336"/>
            <path stroke="#b9b9ff" stroke-width="4" d="M2002 828H2336"/>
          </g>
          <g fill="url(#steel)">
            <path d="M1226 855h70v230h-70z"/><path d="M1296 857h26v225h-26z"/>
            <path d="M1480 831h68v280h-68z"/>
            <path d="M1956 870q4 23 22 24v151q-18 2-22 25z"/>
            <path d="M1978 894h306v151h-306z"/>
            <path d="M1326 807h150l4 6v315l-4 5h-150l-4-5V813z"/>
            <path d="M1552 807h398l6 6v315l-6 5h-398l-4-5V813z"/>
          </g>
          <g stroke="#a0a0a0" stroke-width="4"><path d="M1226 969H1952M1978 969H2284"/></g>
          <g fill="none" stroke="#1c1c1c" stroke-width="2">
            <path d="M1227 855v230M1297 856v228M1328 807v326M1550 807v326M1978 894v151M2283 894v151M1956 812v317"/>
            <path stroke="#555" d="M1322 813v315M1479 812v318M1547 812v316M1951 807v326M1226 1085h70M1326 1133h150M1480 1111h68M1552 1133h398"/>
            <path stroke="#8c8c8c" d="M1978 1045h306M1226 855h70M1480 831h68M1978 893h306"/>
          </g>
          <path fill="#333" d="M1720 1129h34l6 4h-44zM1980 1044q16-4 34 0l2 3h-4q-14-3-34 0z"/>
          <g fill="none" stroke="#008c00" stroke-width="5" stroke-dasharray="24 14">
            <path d="M1328 806h150M1552 806h398M1482 829h66M1246 854h60M1974 893h300"/>
            <path stroke-width="3" stroke-dasharray="none" d="M1481 810v15M1957 872q1 12 6 17"/>
          </g>
          <path fill="#ffff56" d="M2088 556q-18 2-24 18l-19 236q2 14 18 18l232-19q14-4 14-24z"/>
          <path fill="#8b0000" d="M2320 783h16v19h-27z"/>
          <path fill="#6b8bae" d="M2088 468h717v44l-272 271h-206l-263 24 24-267z"/>
          <path fill="none" stroke="#00d200" stroke-width="10" d="M1046 1327v-75"/><path fill="#00c400" d="M1046 1231l10 24h-20z"/>
          <path fill="none" stroke="#d60000" stroke-width="10" d="M1046 1327h75"/><path fill="#c00000" d="M1139 1327l-21 10v-20z"/>
          <circle cx="1046" cy="1328" r="9" fill="#0000b0"/>
          <g class="axis"><text x="1060" y="1222" fill="#3ccc3c">Y</text><text x="1158" y="1327" fill="#ff4a4a">X</text><text x="1052" y="1326" fill="#3a3aff">Z</text></g>
        </svg>
        <svg class="viewcube" viewBox="0 0 172 172"><path fill="#c2c2c2" stroke="#d4d4d4" stroke-width="4" d="M20 2h132l18 18v132l-18 18H20L2 152V20z"/><path fill="#d6d6d6" opacity=".5" d="M2 20h18v132H2zM152 20h18v132h-18z"/><path fill="#eee" stroke="#d4d4d4" stroke-width="3" d="M20 20h132v132H20z"/><text x="84" y="97">上</text></svg>
        <output class="coords">X: 0.000 Y: 0.000 Z: 0.000</output>
        <span class="unit">mm</span>
      </div>
      <div class="dockhead msg">消息<span class="headbtns"><button aria-label="关闭"><svg class="s20"><use href="#close"/></svg></button></span></div>
      <div class="log">文件由版本4.12.12011.0保存，当前软件版本是4.12.12162.0。</div>
    </section>
  </main>

  <footer class="status"><span>机床_3</span><span class="ctl">西门子S840D<i></i></span><span class="user">管理员</span></footer>

  <form class="dialog" aria-label="仿真">
    <div class="dtitle"><svg class="s34"><use href="#logo"/></svg><span>仿真 - 1.1.2 粗车</span><button type="button" aria-label="关闭"><svg class="s24"><use href="#closethin"/></svg></button></div>
    <div class="range"><input type="text" value="1" aria-label="起始"><label for="prog">进度</label><input type="text" value="77" aria-label="结束"></div>
    <div class="progress"><input type="range" value="0" aria-label="起点"><input type="range" id="prog" value="38"></div>
    <div class="player">
      <div class="keys">
        <button type="button" aria-label="首步"><svg viewBox="0 0 24 24"><path fill="#05b396" d="M2 2.500h1.500v19H2z"/><path fill="#8fd8cb" d="M3.500 2.500H5v19H3.500z"/><path fill="#05b396" d="M16.500 3v18L5 12z"/></svg></button>
        <button type="button" class="p">P<svg class="chev" viewBox="0 0 12 24"><path fill="none" stroke="#ef9312" stroke-width="1.800" d="M10 2L2 12l8 10"/></svg></button>
        <button type="button" aria-label="上一步"><svg viewBox="0 0 24 24"><path fill="none" stroke="#ef9312" stroke-width="1.800" d="M15 2l-8 10 8 10"/></svg></button>
        <button type="button" aria-label="反向播放"><svg viewBox="0 0 24 24"><path fill="#00d800" d="M19.500 2v20L4 12z"/></svg></button>
        <button type="button" aria-label="停止"><svg viewBox="0 0 24 24"><path fill="#eb3b00" d="M3 3h17v17H3z"/></svg></button>
        <button type="button" aria-label="播放"><svg viewBox="0 0 24 24"><path fill="#00d800" d="M4.500 2v20L20 12z"/></svg></button>
        <button type="button" aria-label="下一步"><svg viewBox="0 0 24 24"><path fill="none" stroke="#ef9312" stroke-width="1.800" d="M9 2l8 10-8 10"/></svg></button>
        <button type="button" class="p"><svg class="chev" viewBox="0 0 12 24"><path fill="none" stroke="#ef9312" stroke-width="1.800" d="M2 2l8 10-8 10"/></svg>P</button>
        <button type="button" aria-label="末步"><svg viewBox="0 0 24 24"><path fill="#05b396" d="M18 2.500h2v19h-2zM5.500 3v18L17 12z"/></svg></button>
        <button type="button" aria-label="刀轨显示"><svg class="big" viewBox="0 0 24 24"><path fill="none" stroke="#1e90ff" stroke-width="1.500" d="M3 1.500h18q1.500 0 1.500 2T21 6H3q-1.500 0-1.500-2.200T3 1.500M21 6q1.500 0 1.500 2.500T21 11H3M6 6q-4 0-4 2.500T4 11M3 11q-1.500 0-1.500 2.500T3 16h18M21 11q1.500 0 1.500 2.500M21 16q1.500 0 1.500 3T21 22H3q-1.500 0-1.500-1.800T3 18.500h15"/></svg></button>
        <button type="button" aria-label="双线"><svg class="big" viewBox="0 0 24 24"><path stroke="#0e9ce6" stroke-width="1.800" d="M1 7.500h22M1 16.500h22"/><path stroke="#a5dbf7" d="M1 8.900h22M1 15.100h22"/></svg></button>
      </div>
      <label for="speed">速度</label>
      <div class="speed"><input type="range" id="speed" value="30"><div class="ticks"><i></i><i></i><i></i><i></i><i></i><i></i><i></i><i></i><i></i><i></i><i></i><i></i><i></i><i></i></div></div>
      <span class="mult">x1</span>
    </div>
    <div class="checks">
      <label><input type="checkbox">显示加工参数</label><label><input type="checkbox">显示语句列表</label><label><input type="checkbox">显示实时毛坯</label>
      <button type="button" aria-label="仿真设置"><svg viewBox="0 0 24 24"><path fill="#1d62b5" d="M13 0h3v10h-3z"/><path fill="#999" stroke="#777" d="M13 11h10l-2 3h-3l-3 3h-3z"/><path fill="#f4e36a" d="M13 20h5l-2 4z"/><circle cx="8.500" cy="13.500" r="4.500" fill="#fff" stroke="url(#gearc)" stroke-width="4"/><circle cx="8.500" cy="13.500" r="7" fill="none" stroke="url(#gearc)" stroke-width="2.500" stroke-dasharray="2.400 2"/></svg></button>
    </div>
  </form>
</div>
</body>
</html>
```
FILE: styles.css
```css
* { box-sizing: border-box; }
body {
  margin: 0;
  font: 29px/38px "Noto Sans", "Noto Sans CJK SC", sans-serif;
  color: #000;
  background: #f0f0f0;
}
svg { display: block; overflow: visible; flex: none; }
button { font: inherit; color: inherit; background: none; border: 0; padding: 0; margin: 0; border-radius: 0; }
input { font: inherit; color: inherit; margin: 0; border-radius: 0; }
.defs { position: absolute; width: 0; height: 0; }
.s20 { width: 20px; height: 20px; }
.s24 { width: 24px; height: 24px; }
.s30 { width: 30px; height: 30px; }
.s34 { width: 34px; height: 34px; }
.s40 { width: 40px; height: 40px; }

.window {
  position: relative;
  display: flex;
  flex-direction: column;
  height: 100vh;
  border: 3px solid #dcdcdc;
  overflow: hidden;
}

/* title bar */
.titlebar { display: grid; grid-template-columns: 324px 1fr 324px; align-items: center; height: 67px; padding-bottom: 4px; background: #fff; }
.quick { display: flex; align-items: center; gap: 20px; }
.qmenu svg { width: 20px; height: 24px; }
.titlebar h1 { margin: 0 226px 0 0; font-size: 30px; font-weight: 400; text-align: center; }
.winbtns { display: flex; }
.winbtns button { width: 107px; display: flex; justify-content: center; }

/* ribbon tabs */
.tabs { display: flex; height: 63px; background: #fff; box-shadow: inset 0 -3px #e1e1e1; }
.tabs button { padding: 0 28px; margin-left: 1px; height: 60px; }
.tabs .file { width: 148px; margin: 0; background: #2b579a; color: #fff; }
.tabs .active { height: 63px; padding: 0 26px 3px; background: #fff; border: 2px solid #e1e1e1; border-top-width: 3px; border-bottom: 0; }
.fill { flex: 1; }
.collapse { width: 24px; height: 24px; margin: 18px 8px 0 0; }

/* ribbon */
.ribbon { display: flex; height: 254px; background: #fff; border-bottom: 3px solid #e1e1e1; }
.group { display: flex; flex-direction: column; height: 241px; border-right: 2px solid #e1e1e1; padding: 19px 2px 0; }
.items { display: flex; flex: 1; }
.items button { display: flex; flex-direction: column; align-items: center; gap: 16px; padding: 0 19px; white-space: nowrap; }
.items .last { padding: 0 17px 0 16px; }
.items svg { width: 76px; height: 76px; margin: 0 -9px; }
.group.tools { padding: 19px 5px 0; }
.caption { text-align: center; height: 32px; line-height: 38px; }
.apt, .pp { font: 700 9px/1 "Noto Sans", sans-serif; fill: #fff; text-anchor: middle; }

/* view toolbar */
.viewbar { display: flex; align-items: center; height: 81px; padding-bottom: 3px; background: #fff; }
.set { display: flex; }
.set button { width: 70px; height: 70px; display: flex; align-items: center; justify-content: center; border: 2px solid transparent; }
.set.wide button { width: 75px; }
.set button svg { width: 56px; height: 56px; }
.set .on { background: #c0dcf3; border-color: #90c8f6; }
.grip { flex: none; width: 25px; height: 64px; background: repeating-linear-gradient(#c0c0c0 0 5px, transparent 5px 10px) center / 5px 100% no-repeat; }
.grip.first { width: 16px; }
.bar { flex: none; width: 2px; height: 58px; margin: 0 5px; background: #ccc; }
.picks { padding-left: 3px; }
.curves { padding-left: 3px; }
.curves button { width: 74px; }
.more { width: 50px; line-height: 64px; padding-left: 6px; text-align: center; font-size: 32px; color: #444; }
.end .more { width: 35px; padding-left: 10px; text-align: right; }
.end:last-child .more { width: 36px; }

/* work area */
.work { flex: 1; min-height: 0; display: flex; }
.side { width: 914px; flex: none; display: flex; flex-direction: column; padding-top: 3px; }
.dockhead { flex: none; display: flex; align-items: center; justify-content: space-between; height: 53px; padding: 0 16px 0 8px; background: #dadada; border: 3px solid #b6b6b6; border-left: 0; }
.headbtns { display: flex; gap: 30px; color: #333; }
.sidebar { flex: none; display: flex; align-items: center; height: 72px; margin-top: 4px; background: #fff; }
.sidebar button { width: 60px; display: flex; justify-content: center; }
.sidebar .narrow { padding-right: 6px; }
.sidebar svg { width: 40px; height: 40px; }
.sidebar i { width: 2px; height: 48px; margin: 0 6px; background: #ddd; }
.search { flex: none; display: flex; align-items: center; gap: 19px; height: 56px; margin: 7px 0 9px; padding-left: 16px; background: #fff; border: 3px solid #7a7a7a; border-left: 0; }
.search input { flex: 1; border: 0; outline: 0; padding: 0; height: 40px; background: none; }
.search input::placeholder { color: #808080; opacity: 1; }

.treebox { flex: 1; min-height: 0; display: grid; grid-template: 1fr 39px / 1fr 39px; background: #f0f0f0; border: 3px solid #828790; border-left: 0; }
.treeview { overflow: hidden; background: #fff; min-height: 0; }
table { width: 980px; height: 915px; table-layout: fixed; border-collapse: collapse; }
.c1 { width: 590px; }
.c2 { width: 95px; }
.c3 { width: 135px; }
th { height: 58px; padding: 0; font-weight: 400; border-right: 2px solid #e3e3e3; }
th:first-child { padding-right: 6px; }
th.cut { text-align: left; padding-left: 26px; }
td { padding: 0; height: 50px; text-align: center; }
td:nth-child(2) { text-align: left; padding-left: 7px; }
td:nth-child(4) { text-align: left; padding-left: 48px; }
td:first-child { text-align: left; height: 50px; }
.name { display: flex; align-items: center; height: 50px; }
.tw { width: 22px; height: 22px; margin-right: 10px; }
.l1 { padding-left: 29px; }
.l2 { padding-left: 58px; }
.l3 { padding-left: 87px; }
.item { flex: 1; display: flex; align-items: center; gap: 14px; height: 50px; border: 2px dotted transparent; }
.item svg { width: 38px; height: 38px; }
.sel td:nth-child(n+2) { background: #cce8ff; }
.sel .item { background: #cce8ff; border-color: #222; box-shadow: -5px 0 #cce8ff; }
.vscroll { display: flex; flex-direction: column; align-items: center; }
.vscroll svg { width: 20px; height: 20px; margin: 10px 0; }
.vscroll i { width: 37px; height: 464px; margin-bottom: auto; background: #cdcdcd; }
.hscroll { display: flex; align-items: center; }
.hscroll svg { width: 20px; height: 20px; margin: 0 9px; }
.hscroll i { width: 200px; height: 37px; margin-right: auto; background: #cdcdcd; }

.docktabs { flex: none; display: flex; align-items: flex-start; height: 59px; }
.docktabs button { height: 53px; padding: 0 24px; border-bottom: 2px solid #d5d5d5; }
.docktabs .active { height: 57px; padding: 0 30px; background: #fff; border: 2px solid #d5d5d5; border-top: 0; }

/* viewport and messages */
.center { flex: 1; min-width: 0; display: flex; flex-direction: column; margin: 0 0 1px 9px; }
.viewport { position: relative; flex: 1; min-height: 0; overflow: hidden; background: #fff; }
.scene { width: 100%; }
.axis text { font: 32px "Liberation Serif", serif; text-anchor: middle; }
.viewcube { position: absolute; top: 119px; right: 112px; width: 172px; height: 172px; }
.viewcube text { font: 28px "Noto Sans CJK SC", sans-serif; text-anchor: middle; }
.coords, .unit { position: absolute; bottom: 0; font: 38px/46px "Liberation Sans", sans-serif; color: #444; }
.coords { left: 12px; }
.unit { right: 12px; }
.dockhead.msg { margin: 13px 0 5px; padding-right: 12px; border-left: 3px solid #b6b6b6; }
.log { flex: none; height: 170px; padding: 11px 8px; background: #fff; border: 3px solid #7a7a7a; }

/* status bar */
.status { flex: none; display: flex; justify-content: flex-end; height: 56px; padding: 5px 20px 3px 0; }
.status span { display: flex; align-items: center; padding: 0 17px; border-left: 3px solid #c6c6c6; }
.status .ctl { gap: 18px; border-left: 0; padding: 0 29px 0 24px; }
.status i { width: 25px; height: 27px; border-radius: 50%; background: #a0a0a4; }
.status .user { border-right: 3px solid #c6c6c6; }

/* simulation dialog floats over the viewport */
.dialog { position: absolute; right: 50px; bottom: 164px; width: 1185px; height: 449px; padding: 0 43px; background: #f0f0f0; border: 3px solid #a0a0a0; }
.dtitle { display: flex; align-items: center; gap: 7px; height: 68px; margin: 0 -9px 30px -23px; font-size: 30px; }
.dtitle span { flex: 1; }
.range { display: flex; justify-content: space-between; align-items: center; }
.range input { width: 192px; height: 55px; padding: 0 4px; border: 2px solid #7a7a7a; border-top-width: 3px; background: #fff; }
.progress { position: relative; height: 50px; margin: 3px 0 17px; background: linear-gradient(#d6d6d6 0 2px, #e7eaea 2px 8px, #d6d6d6 8px) 0 19px / 100% 10px no-repeat; }
.progress input { position: absolute; inset: 0; width: 100%; height: 50px; }
input[type=range] { appearance: none; background: none; padding: 0; }
.progress input::-webkit-slider-thumb { appearance: none; width: 24px; height: 50px; background: #0078d7; }
.player { display: flex; align-items: center; height: 93px; padding: 2px 10px 0 13px; border: 2px solid #dcdcdc; }
.keys { display: flex; }
.keys button { width: 67px; height: 44px; display: flex; justify-content: center; align-items: center; }
.keys svg { width: 40px; height: 40px; }
.keys .big { width: 44px; height: 44px; }
.keys .chev { width: 20px; height: 40px; }
.keys .p { color: #ef9312; gap: 2px; font-size: 32px; }
.player label { margin: 0 12px; }
.speed { width: 202px; height: 62px; }
.speed input[type=range] { display: block; width: 100%; height: 46px; background: linear-gradient(#d6d6d6 0 2px, #e7eaea 2px 8px, #d6d6d6 8px) 0 17px / 100% 10px no-repeat; }
.speed input::-webkit-slider-thumb { appearance: none; width: 27px; height: 46px; background: #0078d7; clip-path: polygon(0 0, 100% 0, 100% 70%, 50% 100%, 0 70%); }
.ticks { display: flex; justify-content: space-between; padding: 3px 12px 0; }
.ticks i { width: 2px; height: 9px; background: #a09f8a; }
.ticks i:first-child, .ticks i:last-child { height: 12px; }
.mult { margin-left: 11px; }
.checks { display: flex; align-items: center; gap: 12px; margin-top: 20px; }
.checks label { display: flex; align-items: center; gap: 12px; }
.checks input { appearance: none; width: 30px; height: 30px; border: 2px solid #333; background: #fff; }
.checks button { margin: 0 4px 0 auto; }
.checks svg { width: 60px; height: 60px; }
```
